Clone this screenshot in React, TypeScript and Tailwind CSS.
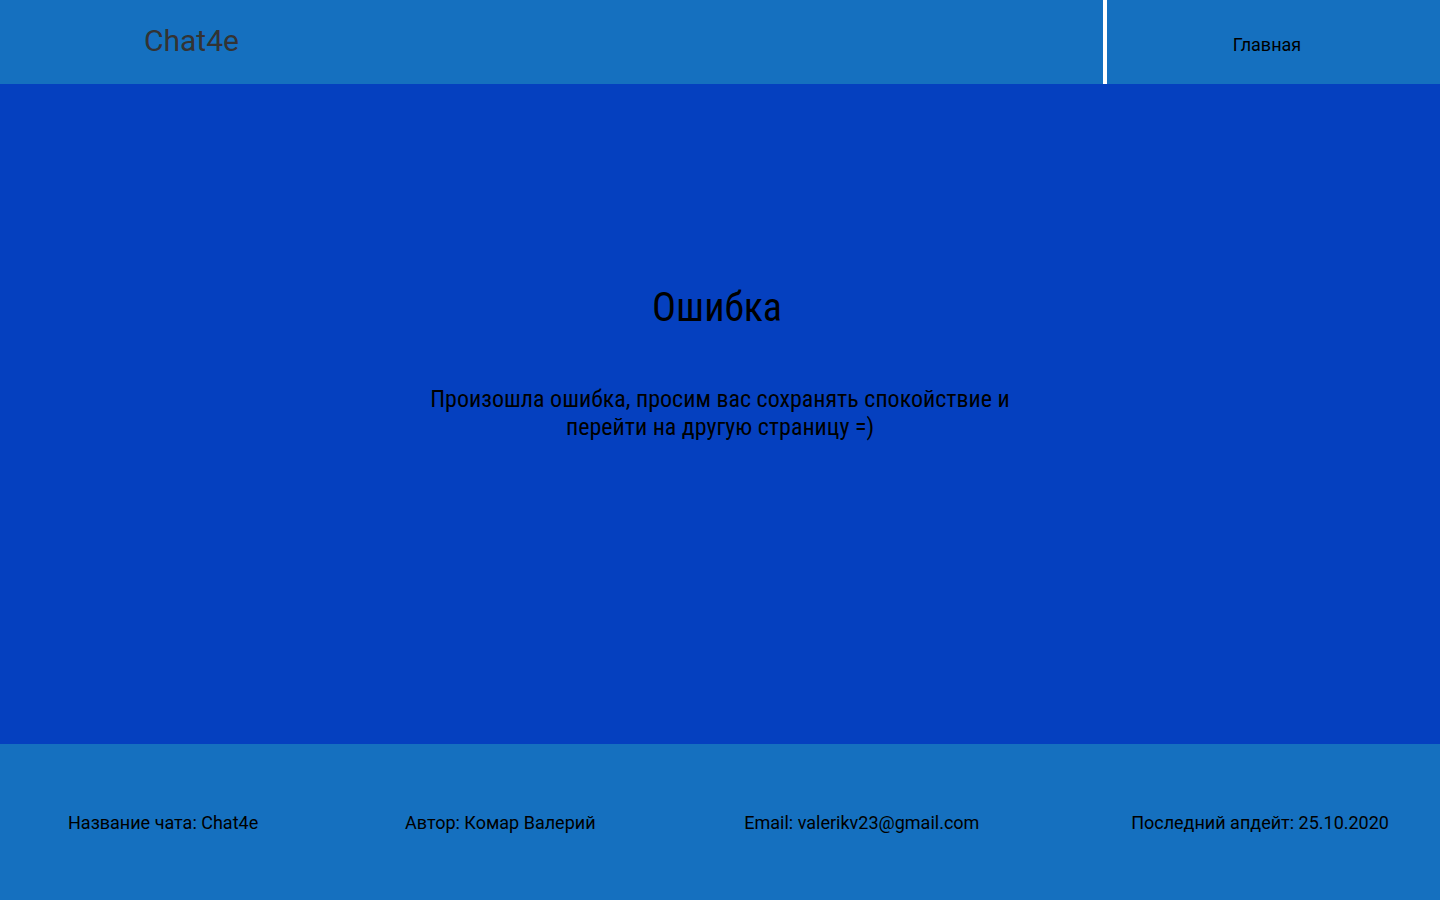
export default function App() {
	return (
		<div className="flex flex-col h-[900px] w-[1440px]" style={{ fontFamily: 'Roboto, "Liberation Sans", sans-serif' }}>
			<header className="flex h-[84px] bg-[#1570bf]">
				<div className="flex-1 flex items-center pl-[144px]">
					<span className="text-[30px] text-[#333333] leading-none pb-[2px]">Chat4e</span>
				</div>
				<div className="w-[4px] bg-white" />
				<nav className="w-[320px] mr-[13px] flex items-center justify-center pt-[5px]">
					<a className="text-[18px] text-black">Главная</a>
				</nav>
			</header>
			<main className="flex-1 bg-[#0540bf] flex flex-col items-center text-black">
				<h1 className="mt-[200px] text-[40px] leading-[48px] [font-stretch:condensed] pr-[6px]">Ошибка</h1>
				<p className="mt-[53px] w-[620px] text-center text-[24px] leading-[28px] [font-stretch:condensed]">
					Произошла ошибка, просим вас сохранять спокойствие и перейти на другую страницу =)
				</p>
			</main>
			<footer className="h-[156px] bg-[#1570bf] flex items-center justify-between pl-[68px] pr-[51px] text-[18px] text-black">
				<span>Название чата: Chat4e</span>
				<span className="-ml-[2px]">Автор: Комар Валерий</span>
				<span className="mr-[3px]">Email: valerikv23@gmail.com</span>
				<span>Последний апдейт: 25.10.2020</span>
			</footer>
		</div>
	)
}
